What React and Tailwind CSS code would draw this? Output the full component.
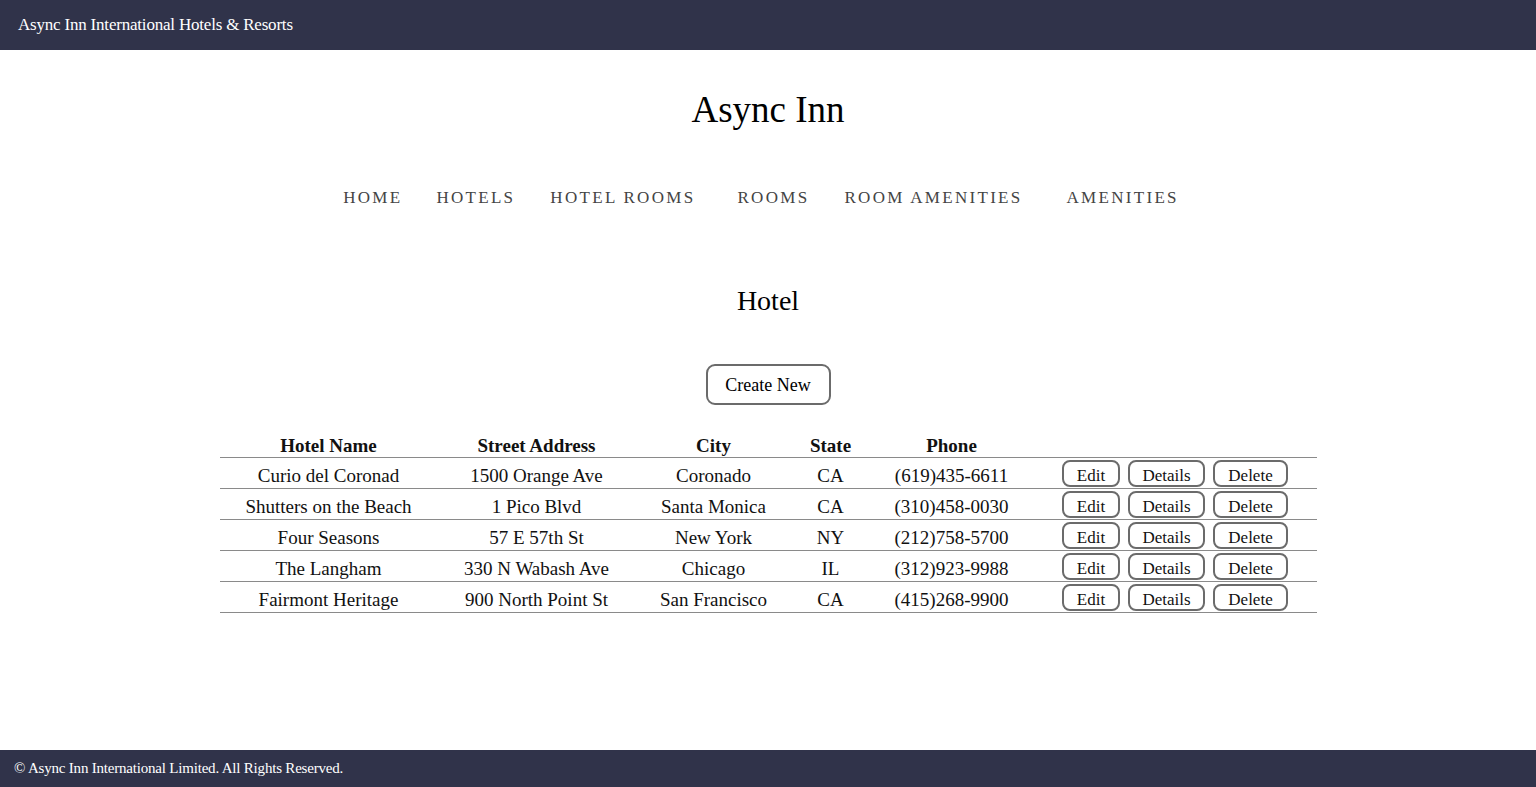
import React from "react";

const hotels = [
  ["Curio del Coronad", "1500 Orange Ave", "Coronado", "CA", "(619)435-6611"],
  ["Shutters on the Beach", "1 Pico Blvd", "Santa Monica", "CA", "(310)458-0030"],
  ["Four Seasons", "57 E 57th St", "New York", "NY", "(212)758-5700"],
  ["The Langham", "330 N Wabash Ave", "Chicago", "IL", "(312)923-9988"],
  ["Fairmont Heritage", "900 North Point St", "San Francisco", "CA", "(415)268-9900"],
];

const navItems = [
  ["HOME", "mr-[34px]"],
  ["HOTELS", "mr-[35px]"],
  ["HOTEL ROOMS", "mr-[42px]"],
  ["ROOMS", "mr-[35px]"],
  ["ROOM AMENITIES", "mr-[44px]"],
  ["AMENITIES", "mr-[14px]"],
];

function RowButton({ label, w }) {
  return (
    <button className={`${w} h-[27px] border-2 border-[#6b6b6b] rounded-[8px] bg-white text-[17px] leading-none text-[#111] pt-[3px]`}>
      {label}
    </button>
  );
}

export default function App() {
  return (
    <div className="min-h-screen flex flex-col bg-white font-['Liberation_Serif',serif] text-[#111]">
      {/* top bar */}
      <header className="h-[50px] bg-[#30334a] flex items-center px-[18px]">
        <span className="text-white text-[17px] tracking-[-0.2px]">Async Inn International Hotels &amp; Resorts</span>
      </header>

      <main className="flex-1 flex flex-col items-center">
        <h1 className="mt-[37px] text-[37px] leading-[46px] text-black">Async Inn</h1>

        <nav className="mt-[52px] flex text-[17px] tracking-[2.3px] text-[#444]">
          {navItems.map(([n, m]) => (
            <a key={n} href="#" className={m}>{n}</a>
          ))}
        </nav>

        <h2 className="mt-[73px] text-[28px] leading-[34px] text-black">Hotel</h2>

        <button className="mt-[46px] w-[125px] h-[41px] border-2 border-[#6b6b6b] rounded-[9px] text-[18px] text-black pt-[2px]">
          Create New
        </button>

        <table className="mt-[31px] w-[1097px] border-collapse text-[19px]">
          <thead>
            <tr className="border-b border-[#8a8a8a]">
              <th className="w-[218px] h-[22px] font-bold text-center align-top leading-[20px]">Hotel Name</th>
              <th className="w-[198px] font-bold text-center align-top leading-[20px]">Street Address</th>
              <th className="w-[156px] font-bold text-center align-top leading-[20px]">City</th>
              <th className="w-[78px] font-bold text-center align-top leading-[20px]">State</th>
              <th className="w-[164px] font-bold text-center align-top leading-[20px]">Phone</th>
              <th></th>
            </tr>
          </thead>
          <tbody>
            {hotels.map((h) => (
              <tr key={h[0]} className="border-b border-[#8a8a8a] h-[31px]">
                {h.map((c, i) => (
                  <td key={i} className="text-center align-top pt-[7px] leading-[22px]">{c}</td>
                ))}
                <td className="align-bottom pb-[1px]">
                  <div className="flex justify-center gap-[8px]">
                    <RowButton label="Edit" w="w-[58px]" />
                    <RowButton label="Details" w="w-[77px]" />
                    <RowButton label="Delete" w="w-[75px]" />
                  </div>
                </td>
              </tr>
            ))}
          </tbody>
        </table>
      </main>

      <footer className="h-[37px] bg-[#30334a] flex items-center px-[14px]">
        <span className="text-white text-[15px] tracking-[-0.2px]">© Async Inn International Limited. All Rights Reserved.</span>
      </footer>
    </div>
  );
}
